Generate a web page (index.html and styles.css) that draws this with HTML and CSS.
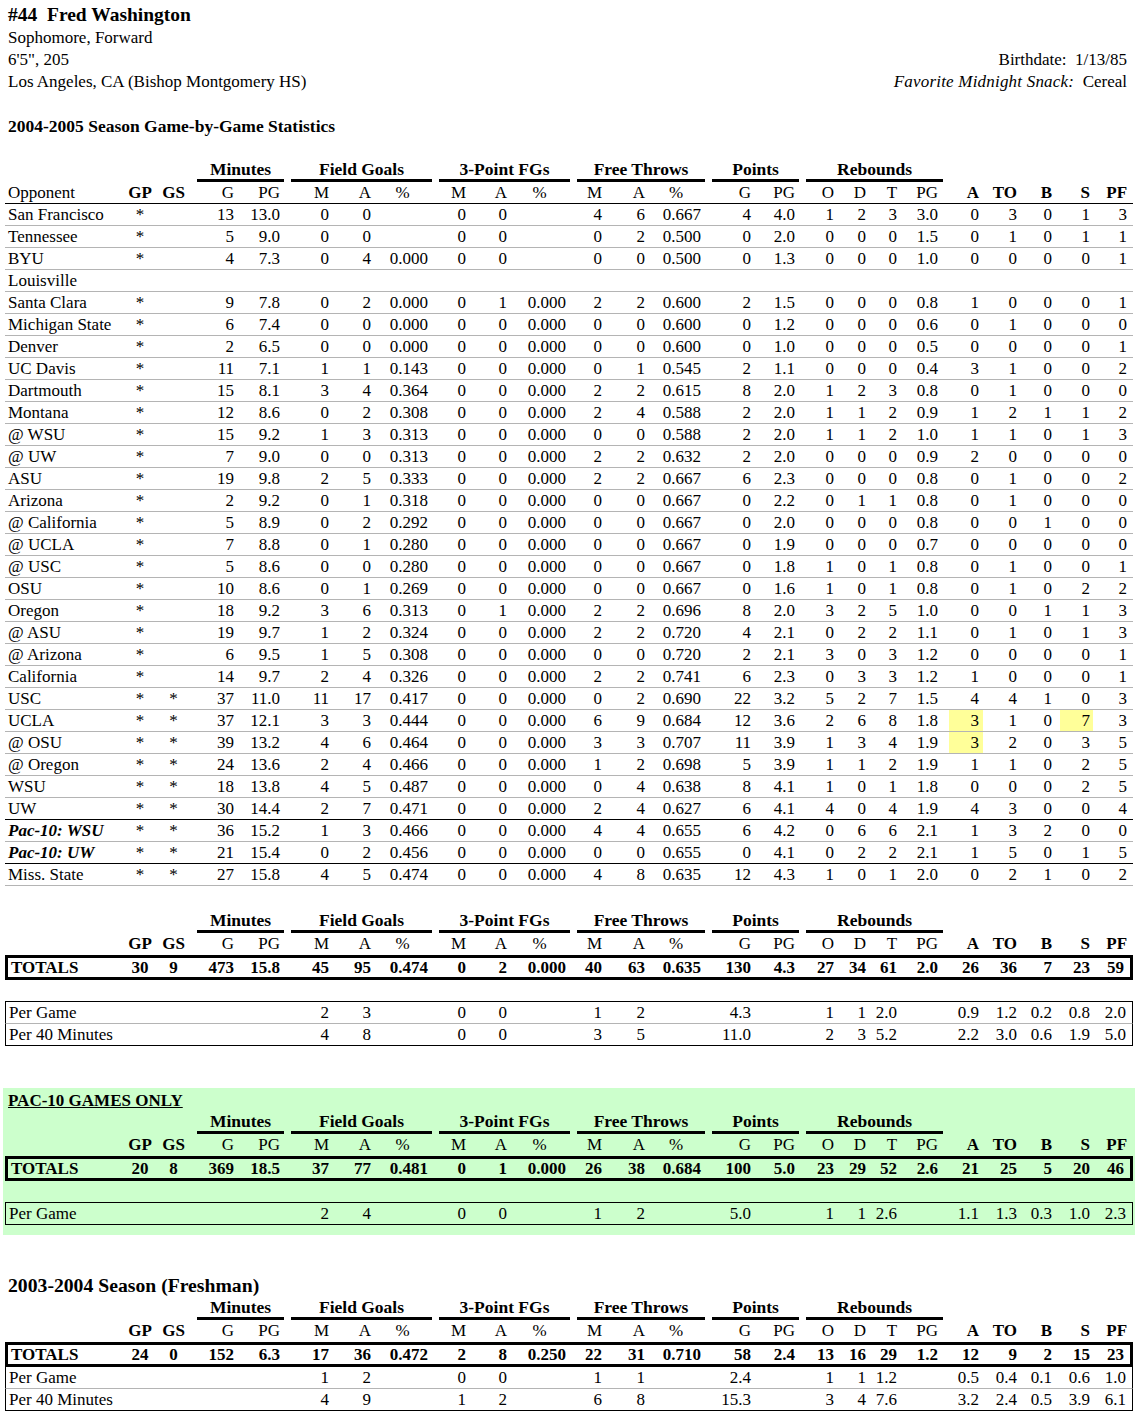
FILE: index.html
```html
<!DOCTYPE html>
<html>
<head>
<meta charset="utf-8">
<title>#44 Fred Washington</title>
<link rel="stylesheet" href="styles.css">
</head>
<body>
<div class="bio">
  <div class="name">#44&nbsp; Fred Washington</div>
  <div class="line"><span>Sophomore, Forward</span></div>
  <div class="line"><span>6'5", 205</span><span>Birthdate:&nbsp; 1/13/85</span></div>
  <div class="line"><span>Los Angeles, CA (Bishop Montgomery HS)</span><span><i class="snack">Favorite Midnight Snack:</i>&nbsp; Cereal</span></div>
</div>

<h2 class="heading">2004-2005 Season Game-by-Game Statistics</h2>

<table class="stats first">
<colgroup><col class="c-opp"><col class="c-gp"><col class="c-gs"><col class="c-ming"><col class="c-minpg"><col class="c-fgm"><col class="c-fga"><col class="c-fgp"><col class="c-3pm"><col class="c-3pa"><col class="c-3pp"><col class="c-ftm"><col class="c-fta"><col class="c-ftp"><col class="c-ptsg"><col class="c-ptspg"><col class="c-ro"><col class="c-rd"><col class="c-rt"><col class="c-rpg"><col class="c-a"><col class="c-to"><col class="c-b"><col class="c-s"><col class="c-pf"></colgroup>
<tr class="grp-row"><td colspan="3"></td><td colspan="2"><div class="grp">Minutes</div></td><td colspan="3"><div class="grp">Field Goals</div></td><td colspan="3"><div class="grp">3-Point FGs</div></td><td colspan="3"><div class="grp">Free Throws</div></td><td colspan="2"><div class="grp">Points</div></td><td colspan="4"><div class="grp reb">Rebounds</div></td><td colspan="5"></td></tr>
<tr class="hdr ruled"><th>Opponent</th><th class="b">GP</th><th class="b">GS</th><th>G</th><th>PG</th><th>M</th><th>A</th><th>%</th><th>M</th><th>A</th><th>%</th><th>M</th><th>A</th><th>%</th><th>G</th><th>PG</th><th>O</th><th>D</th><th>T</th><th>PG</th><th class="b">A</th><th class="b">TO</th><th class="b">B</th><th class="b">S</th><th class="b">PF</th></tr>
<tr class="data"><td>San Francisco</td><td>*</td><td></td><td>13</td><td>13.0</td><td>0</td><td>0</td><td></td><td>0</td><td>0</td><td></td><td>4</td><td>6</td><td>0.667</td><td>4</td><td>4.0</td><td>1</td><td>2</td><td>3</td><td>3.0</td><td>0</td><td>3</td><td>0</td><td>1</td><td>3</td></tr>
<tr class="data"><td>Tennessee</td><td>*</td><td></td><td>5</td><td>9.0</td><td>0</td><td>0</td><td></td><td>0</td><td>0</td><td></td><td>0</td><td>2</td><td>0.500</td><td>0</td><td>2.0</td><td>0</td><td>0</td><td>0</td><td>1.5</td><td>0</td><td>1</td><td>0</td><td>1</td><td>1</td></tr>
<tr class="data"><td>BYU</td><td>*</td><td></td><td>4</td><td>7.3</td><td>0</td><td>4</td><td>0.000</td><td>0</td><td>0</td><td></td><td>0</td><td>0</td><td>0.500</td><td>0</td><td>1.3</td><td>0</td><td>0</td><td>0</td><td>1.0</td><td>0</td><td>0</td><td>0</td><td>0</td><td>1</td></tr>
<tr class="data"><td>Louisville</td><td></td><td></td><td></td><td></td><td></td><td></td><td></td><td></td><td></td><td></td><td></td><td></td><td></td><td></td><td></td><td></td><td></td><td></td><td></td><td></td><td></td><td></td><td></td><td></td></tr>
<tr class="data"><td>Santa Clara</td><td>*</td><td></td><td>9</td><td>7.8</td><td>0</td><td>2</td><td>0.000</td><td>0</td><td>1</td><td>0.000</td><td>2</td><td>2</td><td>0.600</td><td>2</td><td>1.5</td><td>0</td><td>0</td><td>0</td><td>0.8</td><td>1</td><td>0</td><td>0</td><td>0</td><td>1</td></tr>
<tr class="data"><td>Michigan State</td><td>*</td><td></td><td>6</td><td>7.4</td><td>0</td><td>0</td><td>0.000</td><td>0</td><td>0</td><td>0.000</td><td>0</td><td>0</td><td>0.600</td><td>0</td><td>1.2</td><td>0</td><td>0</td><td>0</td><td>0.6</td><td>0</td><td>1</td><td>0</td><td>0</td><td>0</td></tr>
<tr class="data"><td>Denver</td><td>*</td><td></td><td>2</td><td>6.5</td><td>0</td><td>0</td><td>0.000</td><td>0</td><td>0</td><td>0.000</td><td>0</td><td>0</td><td>0.600</td><td>0</td><td>1.0</td><td>0</td><td>0</td><td>0</td><td>0.5</td><td>0</td><td>0</td><td>0</td><td>0</td><td>1</td></tr>
<tr class="data"><td>UC Davis</td><td>*</td><td></td><td>11</td><td>7.1</td><td>1</td><td>1</td><td>0.143</td><td>0</td><td>0</td><td>0.000</td><td>0</td><td>1</td><td>0.545</td><td>2</td><td>1.1</td><td>0</td><td>0</td><td>0</td><td>0.4</td><td>3</td><td>1</td><td>0</td><td>0</td><td>2</td></tr>
<tr class="data"><td>Dartmouth</td><td>*</td><td></td><td>15</td><td>8.1</td><td>3</td><td>4</td><td>0.364</td><td>0</td><td>0</td><td>0.000</td><td>2</td><td>2</td><td>0.615</td><td>8</td><td>2.0</td><td>1</td><td>2</td><td>3</td><td>0.8</td><td>0</td><td>1</td><td>0</td><td>0</td><td>0</td></tr>
<tr class="data"><td>Montana</td><td>*</td><td></td><td>12</td><td>8.6</td><td>0</td><td>2</td><td>0.308</td><td>0</td><td>0</td><td>0.000</td><td>2</td><td>4</td><td>0.588</td><td>2</td><td>2.0</td><td>1</td><td>1</td><td>2</td><td>0.9</td><td>1</td><td>2</td><td>1</td><td>1</td><td>2</td></tr>
<tr class="data"><td>@ WSU</td><td>*</td><td></td><td>15</td><td>9.2</td><td>1</td><td>3</td><td>0.313</td><td>0</td><td>0</td><td>0.000</td><td>0</td><td>0</td><td>0.588</td><td>2</td><td>2.0</td><td>1</td><td>1</td><td>2</td><td>1.0</td><td>1</td><td>1</td><td>0</td><td>1</td><td>3</td></tr>
<tr class="data"><td>@ UW</td><td>*</td><td></td><td>7</td><td>9.0</td><td>0</td><td>0</td><td>0.313</td><td>0</td><td>0</td><td>0.000</td><td>2</td><td>2</td><td>0.632</td><td>2</td><td>2.0</td><td>0</td><td>0</td><td>0</td><td>0.9</td><td>2</td><td>0</td><td>0</td><td>0</td><td>0</td></tr>
<tr class="data"><td>ASU</td><td>*</td><td></td><td>19</td><td>9.8</td><td>2</td><td>5</td><td>0.333</td><td>0</td><td>0</td><td>0.000</td><td>2</td><td>2</td><td>0.667</td><td>6</td><td>2.3</td><td>0</td><td>0</td><td>0</td><td>0.8</td><td>0</td><td>1</td><td>0</td><td>0</td><td>2</td></tr>
<tr class="data"><td>Arizona</td><td>*</td><td></td><td>2</td><td>9.2</td><td>0</td><td>1</td><td>0.318</td><td>0</td><td>0</td><td>0.000</td><td>0</td><td>0</td><td>0.667</td><td>0</td><td>2.2</td><td>0</td><td>1</td><td>1</td><td>0.8</td><td>0</td><td>1</td><td>0</td><td>0</td><td>0</td></tr>
<tr class="data"><td>@ California</td><td>*</td><td></td><td>5</td><td>8.9</td><td>0</td><td>2</td><td>0.292</td><td>0</td><td>0</td><td>0.000</td><td>0</td><td>0</td><td>0.667</td><td>0</td><td>2.0</td><td>0</td><td>0</td><td>0</td><td>0.8</td><td>0</td><td>0</td><td>1</td><td>0</td><td>0</td></tr>
<tr class="data"><td>@ UCLA</td><td>*</td><td></td><td>7</td><td>8.8</td><td>0</td><td>1</td><td>0.280</td><td>0</td><td>0</td><td>0.000</td><td>0</td><td>0</td><td>0.667</td><td>0</td><td>1.9</td><td>0</td><td>0</td><td>0</td><td>0.7</td><td>0</td><td>0</td><td>0</td><td>0</td><td>0</td></tr>
<tr class="data"><td>@ USC</td><td>*</td><td></td><td>5</td><td>8.6</td><td>0</td><td>0</td><td>0.280</td><td>0</td><td>0</td><td>0.000</td><td>0</td><td>0</td><td>0.667</td><td>0</td><td>1.8</td><td>1</td><td>0</td><td>1</td><td>0.8</td><td>0</td><td>1</td><td>0</td><td>0</td><td>1</td></tr>
<tr class="data"><td>OSU</td><td>*</td><td></td><td>10</td><td>8.6</td><td>0</td><td>1</td><td>0.269</td><td>0</td><td>0</td><td>0.000</td><td>0</td><td>0</td><td>0.667</td><td>0</td><td>1.6</td><td>1</td><td>0</td><td>1</td><td>0.8</td><td>0</td><td>1</td><td>0</td><td>2</td><td>2</td></tr>
<tr class="data"><td>Oregon</td><td>*</td><td></td><td>18</td><td>9.2</td><td>3</td><td>6</td><td>0.313</td><td>0</td><td>1</td><td>0.000</td><td>2</td><td>2</td><td>0.696</td><td>8</td><td>2.0</td><td>3</td><td>2</td><td>5</td><td>1.0</td><td>0</td><td>0</td><td>1</td><td>1</td><td>3</td></tr>
<tr class="data"><td>@ ASU</td><td>*</td><td></td><td>19</td><td>9.7</td><td>1</td><td>2</td><td>0.324</td><td>0</td><td>0</td><td>0.000</td><td>2</td><td>2</td><td>0.720</td><td>4</td><td>2.1</td><td>0</td><td>2</td><td>2</td><td>1.1</td><td>0</td><td>1</td><td>0</td><td>1</td><td>3</td></tr>
<tr class="data"><td>@ Arizona</td><td>*</td><td></td><td>6</td><td>9.5</td><td>1</td><td>5</td><td>0.308</td><td>0</td><td>0</td><td>0.000</td><td>0</td><td>0</td><td>0.720</td><td>2</td><td>2.1</td><td>3</td><td>0</td><td>3</td><td>1.2</td><td>0</td><td>0</td><td>0</td><td>0</td><td>1</td></tr>
<tr class="data"><td>California</td><td>*</td><td></td><td>14</td><td>9.7</td><td>2</td><td>4</td><td>0.326</td><td>0</td><td>0</td><td>0.000</td><td>2</td><td>2</td><td>0.741</td><td>6</td><td>2.3</td><td>0</td><td>3</td><td>3</td><td>1.2</td><td>1</td><td>0</td><td>0</td><td>0</td><td>1</td></tr>
<tr class="data"><td>USC</td><td>*</td><td>*</td><td>37</td><td>11.0</td><td>11</td><td>17</td><td>0.417</td><td>0</td><td>0</td><td>0.000</td><td>0</td><td>2</td><td>0.690</td><td>22</td><td>3.2</td><td>5</td><td>2</td><td>7</td><td>1.5</td><td>4</td><td>4</td><td>1</td><td>0</td><td>3</td></tr>
<tr class="data"><td>UCLA</td><td>*</td><td>*</td><td>37</td><td>12.1</td><td>3</td><td>3</td><td>0.444</td><td>0</td><td>0</td><td>0.000</td><td>6</td><td>9</td><td>0.684</td><td>12</td><td>3.6</td><td>2</td><td>6</td><td>8</td><td>1.8</td><td class="hl">3</td><td>1</td><td>0</td><td class="hl">7</td><td>3</td></tr>
<tr class="data"><td>@ OSU</td><td>*</td><td>*</td><td>39</td><td>13.2</td><td>4</td><td>6</td><td>0.464</td><td>0</td><td>0</td><td>0.000</td><td>3</td><td>3</td><td>0.707</td><td>11</td><td>3.9</td><td>1</td><td>3</td><td>4</td><td>1.9</td><td class="hl">3</td><td>2</td><td>0</td><td>3</td><td>5</td></tr>
<tr class="data"><td>@ Oregon</td><td>*</td><td>*</td><td>24</td><td>13.6</td><td>2</td><td>4</td><td>0.466</td><td>0</td><td>0</td><td>0.000</td><td>1</td><td>2</td><td>0.698</td><td>5</td><td>3.9</td><td>1</td><td>1</td><td>2</td><td>1.9</td><td>1</td><td>1</td><td>0</td><td>2</td><td>5</td></tr>
<tr class="data"><td>WSU</td><td>*</td><td>*</td><td>18</td><td>13.8</td><td>4</td><td>5</td><td>0.487</td><td>0</td><td>0</td><td>0.000</td><td>0</td><td>4</td><td>0.638</td><td>8</td><td>4.1</td><td>1</td><td>0</td><td>1</td><td>1.8</td><td>0</td><td>0</td><td>0</td><td>2</td><td>5</td></tr>
<tr class="data sep"><td>UW</td><td>*</td><td>*</td><td>30</td><td>14.4</td><td>2</td><td>7</td><td>0.471</td><td>0</td><td>0</td><td>0.000</td><td>2</td><td>4</td><td>0.627</td><td>6</td><td>4.1</td><td>4</td><td>0</td><td>4</td><td>1.9</td><td>4</td><td>3</td><td>0</td><td>0</td><td>4</td></tr>
<tr class="data"><td class="conf">Pac-10: WSU</td><td>*</td><td>*</td><td>36</td><td>15.2</td><td>1</td><td>3</td><td>0.466</td><td>0</td><td>0</td><td>0.000</td><td>4</td><td>4</td><td>0.655</td><td>6</td><td>4.2</td><td>0</td><td>6</td><td>6</td><td>2.1</td><td>1</td><td>3</td><td>2</td><td>0</td><td>0</td></tr>
<tr class="data sep"><td class="conf">Pac-10: UW</td><td>*</td><td>*</td><td>21</td><td>15.4</td><td>0</td><td>2</td><td>0.456</td><td>0</td><td>0</td><td>0.000</td><td>0</td><td>0</td><td>0.655</td><td>0</td><td>4.1</td><td>0</td><td>2</td><td>2</td><td>2.1</td><td>1</td><td>5</td><td>0</td><td>1</td><td>5</td></tr>
<tr class="data"><td>Miss. State</td><td>*</td><td>*</td><td>27</td><td>15.8</td><td>4</td><td>5</td><td>0.474</td><td>0</td><td>0</td><td>0.000</td><td>4</td><td>8</td><td>0.635</td><td>12</td><td>4.3</td><td>1</td><td>0</td><td>1</td><td>2.0</td><td>0</td><td>2</td><td>1</td><td>0</td><td>2</td></tr>
</table>

<table class="stats season">
<colgroup><col class="c-opp"><col class="c-gp"><col class="c-gs"><col class="c-ming"><col class="c-minpg"><col class="c-fgm"><col class="c-fga"><col class="c-fgp"><col class="c-3pm"><col class="c-3pa"><col class="c-3pp"><col class="c-ftm"><col class="c-fta"><col class="c-ftp"><col class="c-ptsg"><col class="c-ptspg"><col class="c-ro"><col class="c-rd"><col class="c-rt"><col class="c-rpg"><col class="c-a"><col class="c-to"><col class="c-b"><col class="c-s"><col class="c-pf"></colgroup>
<tr class="grp-row"><td colspan="3"></td><td colspan="2"><div class="grp">Minutes</div></td><td colspan="3"><div class="grp">Field Goals</div></td><td colspan="3"><div class="grp">3-Point FGs</div></td><td colspan="3"><div class="grp">Free Throws</div></td><td colspan="2"><div class="grp">Points</div></td><td colspan="4"><div class="grp reb">Rebounds</div></td><td colspan="5"></td></tr>
<tr class="hdr"><th></th><th class="b">GP</th><th class="b">GS</th><th>G</th><th>PG</th><th>M</th><th>A</th><th>%</th><th>M</th><th>A</th><th>%</th><th>M</th><th>A</th><th>%</th><th>G</th><th>PG</th><th>O</th><th>D</th><th>T</th><th>PG</th><th class="b">A</th><th class="b">TO</th><th class="b">B</th><th class="b">S</th><th class="b">PF</th></tr>
<tr class="tot"><td>TOTALS</td><td>30</td><td>9</td><td>473</td><td>15.8</td><td>45</td><td>95</td><td>0.474</td><td>0</td><td>2</td><td>0.000</td><td>40</td><td>63</td><td>0.635</td><td>130</td><td>4.3</td><td>27</td><td>34</td><td>61</td><td>2.0</td><td>26</td><td>36</td><td>7</td><td>23</td><td>59</td></tr>
<tr class="gap"><td colspan="25"></td></tr>
<tr class="per top"><td>Per Game</td><td></td><td></td><td></td><td></td><td>2</td><td>3</td><td></td><td>0</td><td>0</td><td></td><td>1</td><td>2</td><td></td><td>4.3</td><td></td><td>1</td><td>1</td><td>2.0</td><td></td><td>0.9</td><td>1.2</td><td>0.2</td><td>0.8</td><td>2.0</td></tr>
<tr class="per end"><td>Per 40 Minutes</td><td></td><td></td><td></td><td></td><td>4</td><td>8</td><td></td><td>0</td><td>0</td><td></td><td>3</td><td>5</td><td></td><td>11.0</td><td></td><td>2</td><td>3</td><td>5.2</td><td></td><td>2.2</td><td>3.0</td><td>0.6</td><td>1.9</td><td>5.0</td></tr>
</table>

<div class="pac10">
<div class="pac-title">PAC-10 GAMES ONLY</div>
<table class="stats">
<colgroup><col class="c-opp"><col class="c-gp"><col class="c-gs"><col class="c-ming"><col class="c-minpg"><col class="c-fgm"><col class="c-fga"><col class="c-fgp"><col class="c-3pm"><col class="c-3pa"><col class="c-3pp"><col class="c-ftm"><col class="c-fta"><col class="c-ftp"><col class="c-ptsg"><col class="c-ptspg"><col class="c-ro"><col class="c-rd"><col class="c-rt"><col class="c-rpg"><col class="c-a"><col class="c-to"><col class="c-b"><col class="c-s"><col class="c-pf"></colgroup>
<tr class="grp-row"><td colspan="3"></td><td colspan="2"><div class="grp">Minutes</div></td><td colspan="3"><div class="grp">Field Goals</div></td><td colspan="3"><div class="grp">3-Point FGs</div></td><td colspan="3"><div class="grp">Free Throws</div></td><td colspan="2"><div class="grp">Points</div></td><td colspan="4"><div class="grp reb">Rebounds</div></td><td colspan="5"></td></tr>
<tr class="hdr"><th></th><th class="b">GP</th><th class="b">GS</th><th>G</th><th>PG</th><th>M</th><th>A</th><th>%</th><th>M</th><th>A</th><th>%</th><th>M</th><th>A</th><th>%</th><th>G</th><th>PG</th><th>O</th><th>D</th><th>T</th><th>PG</th><th class="b">A</th><th class="b">TO</th><th class="b">B</th><th class="b">S</th><th class="b">PF</th></tr>
<tr class="tot"><td>TOTALS</td><td>20</td><td>8</td><td>369</td><td>18.5</td><td>37</td><td>77</td><td>0.481</td><td>0</td><td>1</td><td>0.000</td><td>26</td><td>38</td><td>0.684</td><td>100</td><td>5.0</td><td>23</td><td>29</td><td>52</td><td>2.6</td><td>21</td><td>25</td><td>5</td><td>20</td><td>46</td></tr>
<tr class="gap"><td colspan="25"></td></tr>
<tr class="per top end"><td>Per Game</td><td></td><td></td><td></td><td></td><td>2</td><td>4</td><td></td><td>0</td><td>0</td><td></td><td>1</td><td>2</td><td></td><td>5.0</td><td></td><td>1</td><td>1</td><td>2.6</td><td></td><td>1.1</td><td>1.3</td><td>0.3</td><td>1.0</td><td>2.3</td></tr>
</table>
</div>

<h2 class="heading big">2003-2004 Season (Freshman)</h2>

<table class="stats fresh">
<colgroup><col class="c-opp"><col class="c-gp"><col class="c-gs"><col class="c-ming"><col class="c-minpg"><col class="c-fgm"><col class="c-fga"><col class="c-fgp"><col class="c-3pm"><col class="c-3pa"><col class="c-3pp"><col class="c-ftm"><col class="c-fta"><col class="c-ftp"><col class="c-ptsg"><col class="c-ptspg"><col class="c-ro"><col class="c-rd"><col class="c-rt"><col class="c-rpg"><col class="c-a"><col class="c-to"><col class="c-b"><col class="c-s"><col class="c-pf"></colgroup>
<tr class="grp-row"><td colspan="3"></td><td colspan="2"><div class="grp">Minutes</div></td><td colspan="3"><div class="grp">Field Goals</div></td><td colspan="3"><div class="grp">3-Point FGs</div></td><td colspan="3"><div class="grp">Free Throws</div></td><td colspan="2"><div class="grp">Points</div></td><td colspan="4"><div class="grp reb">Rebounds</div></td><td colspan="5"></td></tr>
<tr class="hdr"><th></th><th class="b">GP</th><th class="b">GS</th><th>G</th><th>PG</th><th>M</th><th>A</th><th>%</th><th>M</th><th>A</th><th>%</th><th>M</th><th>A</th><th>%</th><th>G</th><th>PG</th><th>O</th><th>D</th><th>T</th><th>PG</th><th class="b">A</th><th class="b">TO</th><th class="b">B</th><th class="b">S</th><th class="b">PF</th></tr>
<tr class="tot"><td>TOTALS</td><td>24</td><td>0</td><td>152</td><td>6.3</td><td>17</td><td>36</td><td>0.472</td><td>2</td><td>8</td><td>0.250</td><td>22</td><td>31</td><td>0.710</td><td>58</td><td>2.4</td><td>13</td><td>16</td><td>29</td><td>1.2</td><td>12</td><td>9</td><td>2</td><td>15</td><td>23</td></tr>
<tr class="per"><td>Per Game</td><td></td><td></td><td></td><td></td><td>1</td><td>2</td><td></td><td>0</td><td>0</td><td></td><td>1</td><td>1</td><td></td><td>2.4</td><td></td><td>1</td><td>1</td><td>1.2</td><td></td><td>0.5</td><td>0.4</td><td>0.1</td><td>0.6</td><td>1.0</td></tr>
<tr class="per end"><td>Per 40 Minutes</td><td></td><td></td><td></td><td></td><td>4</td><td>9</td><td></td><td>1</td><td>2</td><td></td><td>6</td><td>8</td><td></td><td>15.3</td><td></td><td>3</td><td>4</td><td>7.6</td><td></td><td>3.2</td><td>2.4</td><td>0.5</td><td>3.9</td><td>6.1</td></tr>
</table>
</body>
</html>
```

FILE: styles.css
```css
body {
  margin: 0;
  font-family: "Liberation Serif", "Times New Roman", serif;
  font-size: 17px;
  color: #000;
  background: #fff;
}

.bio {
  padding: 3px 8px 0;
}
.name {
  font-size: 19.5px;
  font-weight: bold;
  line-height: 24px;
}
.line {
  display: flex;
  justify-content: space-between;
  line-height: 22px;
}
.snack {
  letter-spacing: 0.2px;
}

.heading {
  margin: 22px 0 0;
  padding-left: 8px;
  font-size: 17.5px;
  font-weight: bold;
  line-height: 22px;
}
.heading.big {
  margin-top: 38px;
  font-size: 19.7px;
  line-height: 24px;
}

.stats {
  table-layout: fixed;
  border-collapse: separate;
  border-spacing: 0;
  width: 1128px;
  margin-left: 5px;
}
.stats.first { margin-top: 23px; }
.stats.season { margin-top: 25px; }
.stats.fresh { margin-top: 1px; }

.c-opp { width: 117px; }
.c-gp { width: 36px; }
.c-gs { width: 31px; }
.c-ming { width: 48px; }
.c-minpg { width: 46px; }
.c-fgm { width: 49px; }
.c-fga { width: 42px; }
.c-fgp { width: 57px; }
.c-3pm { width: 38px; }
.c-3pa { width: 41px; }
.c-3pp { width: 59px; }
.c-ftm { width: 36px; }
.c-fta { width: 43px; }
.c-ftp { width: 56px; }
.c-ptsg { width: 50px; }
.c-ptspg { width: 44px; }
.c-ro { width: 39px; }
.c-rd { width: 32px; }
.c-rt { width: 31px; }
.c-rpg { width: 49px; }
.c-a { width: 34px; }
.c-to { width: 37px; }
.c-b { width: 40px; }
.c-s { width: 33px; }
.c-pf { width: 40px; }

.stats td,
.stats th {
  padding: 0 3px 0 0;
  text-align: right;
  line-height: 21px;
  font-weight: normal;
  white-space: nowrap;
  vertical-align: middle;
}

.stats tr:not(.grp-row) > :nth-child(1) { text-align: left; padding-left: 3px; }
.stats tr:not(.grp-row) > :nth-child(2),
.stats tr:not(.grp-row) > :nth-child(3) { text-align: center; padding: 0; }
.stats tr:not(.grp-row) > :nth-child(20) { padding-right: 11px; }
.stats tr:not(.grp-row) > :nth-child(21) { padding-right: 4px; }
.stats tr:not(.grp-row) > :nth-child(23) { padding-right: 8px; }
.stats tr:not(.grp-row) > :nth-child(25) { padding-right: 6px; }

.stats .hdr > :nth-child(8),
.stats .hdr > :nth-child(11),
.stats .hdr > :nth-child(14) { text-align: center; padding: 0; }

.stats th.b { font-weight: bold; }

.grp-row td { padding: 0; }
.grp {
  margin: 0 -1px 0 8px;
  border-bottom: 3px solid #000;
  font-size: 17.5px;
  font-weight: bold;
  text-align: center;
  line-height: 19px;
}
.grp.reb { margin-right: 6px; }

.hdr th { line-height: 22px; }
.hdr.ruled th { line-height: 21px; border-bottom: 1px solid #000; }

.data td { border-bottom: 1px solid #b4b4b4; }
.data.sep td { border-bottom-color: #000; }
.data td.conf { font-weight: bold; font-style: italic; }
.data td.hl { background: #ffff99; }

.tot td {
  font-weight: bold;
  line-height: 19px;
  border-top: 3px solid #000;
  border-bottom: 3px solid #000;
}
.tot td:first-child { border-left: 3px solid #000; }
.tot td:last-child { border-right: 3px solid #000; }
.stats .tot > :nth-child(2) { text-align: right; padding-right: 6px; }
.stats .tot > :nth-child(3) { text-align: right; padding-right: 3px; }

.gap td { height: 21px; padding: 0; line-height: 0; }

.per td { border-bottom: 1px solid #b4b4b4; }
.per td:first-child { border-left: 1px solid #000; }
.per td:last-child { border-right: 1px solid #000; }
.per.top td { border-top: 1px solid #000; }
.per.end td { border-bottom-color: #000; }

.pac10 {
  margin: 42px 0 0 3px;
  padding: 2px 0 10px;
  background: #ccffcc;
}
.pac10 .stats { margin-left: 2px; }
.pac-title {
  padding-left: 5px;
  font-weight: bold;
  text-decoration: underline;
  line-height: 22px;
}
```
